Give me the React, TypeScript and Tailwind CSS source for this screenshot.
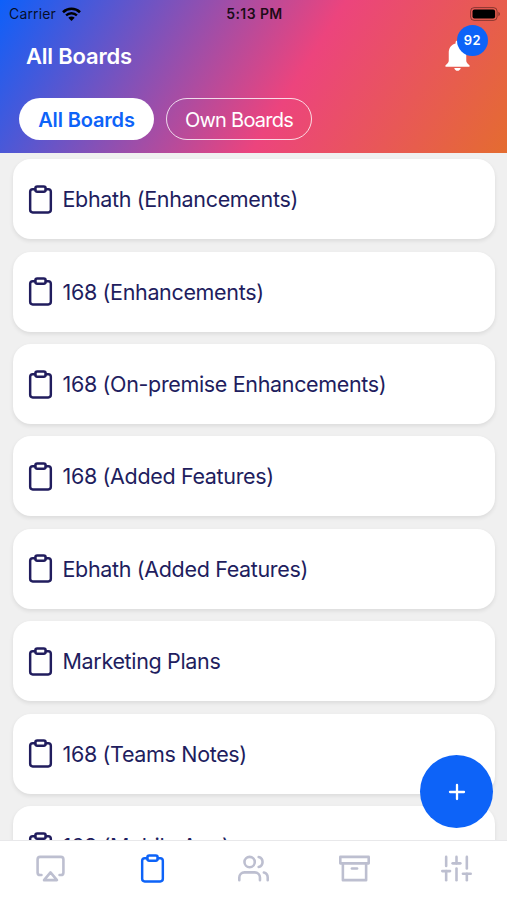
import { FiAirplay, FiArchive, FiPlus, FiSliders, FiUsers } from 'react-icons/fi';

const boards = [
  'Ebhath (Enhancements)',
  '168 (Enhancements)',
  '168 (On-premise Enhancements)',
  '168 (Added Features)',
  'Ebhath (Added Features)',
  'Marketing Plans',
  '168 (Teams Notes)',
  '168 (Mobile App)',
];

const tabs = [
  { name: 'Present', icon: FiAirplay },
  { name: 'Boards', icon: Clipboard, active: true },
  { name: 'Members', icon: FiUsers },
  { name: 'Archive', icon: FiArchive },
  { name: 'Settings', icon: FiSliders },
];

function Clipboard({ className }: { className?: string }) {
  return (
    <svg
      className={className}
      viewBox="0 0 24 24"
      fill="none"
      stroke="currentColor"
      strokeWidth="1.9"
      strokeLinecap="round"
      strokeLinejoin="round"
    >
      <path d="M16 4h2a2 2 0 0 1 2 2v14a2 2 0 0 1-2 2H6a2 2 0 0 1-2-2V6a2 2 0 0 1 2-2h2" />
      <rect x="8" y="2" width="8" height="4" rx="1.5" />
    </svg>
  );
}

function StatusBar() {
  return (
    <div className="grid h-[27px] grid-cols-3 items-center pr-[7px] pl-[9px] text-black/85">
      <div className="flex items-center gap-[6px]">
        <span className="text-[14px] tracking-[0.15px]">Carrier</span>
        <svg className="h-[14px] w-[19px]" viewBox="0 0 19 14">
          <path d="M1 5.2 A12.3 12.3 0 0 1 18 5.2" fill="none" stroke="#000" strokeWidth="2.6" />
          <path d="M4.1 8.4 A7.8 7.8 0 0 1 14.9 8.4" fill="none" stroke="#000" strokeWidth="2.4" />
          <path d="M9.5 14 L6.3 10.7 A4.6 4.6 0 0 1 12.7 10.7 Z" fill="#000" />
        </svg>
      </div>
      <span className="text-center text-[14px] font-semibold tracking-[0.4px]">5:13 PM</span>
      <svg className="h-[14px] w-[30px] justify-self-end" viewBox="0 0 30 14">
        <rect x="0.6" y="0.6" width="26.5" height="12.8" rx="3.6" fill="none" stroke="#000" strokeOpacity="0.4" />
        <rect x="2.5" y="2.4" width="22.6" height="9.2" rx="2" fill="#000" />
        <path d="M28.4 4.8 Q30 5.6 30 7 Q30 8.4 28.4 9.2 Z" fill="#000" fillOpacity="0.4" />
      </svg>
    </div>
  );
}

function Bell() {
  return (
    <button className="relative mt-[13px] h-[31px] w-[25px] text-white">
      <svg viewBox="0 0 26 31" className="h-[31px] w-[25px]" preserveAspectRatio="none">
        <path
          d="M13 0.5 C11.8 0.5 11 1.4 11 2.6 V3.4 C6.4 4.5 3.9 8 3.9 12.6 V20.4 C3.9 22.4 3 23 0.5 25.2 V26.8 H25.5 V25.2 C23 23 22.1 22.4 22.1 20.4 V12.6 C22.1 8 19.6 4.5 15 3.4 V2.6 C15 1.4 14.2 0.5 13 0.5 Z"
          fill="currentColor"
        />
        <path d="M9.6 27.9 H16.4 C15.9 29.8 14.6 30.7 13 30.7 C11.4 30.7 10.1 29.8 9.6 27.9 Z" fill="currentColor" />
      </svg>
      <span className="absolute -top-[15px] left-[12px] flex h-[31px] w-[31px] items-center justify-center rounded-full bg-[#0d63f8] text-[13px] font-semibold tracking-[0.5px]">
        92
      </span>
    </button>
  );
}

export default function App() {
  return (
    <div className="relative flex h-[900px] w-[507px] flex-col overflow-hidden bg-[#f0f0f0] font-['Inter','Liberation_Sans',sans-serif]">
      <header className="h-[153px] shrink-0 bg-[linear-gradient(122deg,#0d60fa_0%,#ec447d_57.5%,#e46c30_100%)]">
        <StatusBar />

        <div className="flex h-[71px] items-start justify-between pr-[37px] pl-[26px]">
          <h1 className="mt-[13px] text-[22px] leading-[32px] font-semibold tracking-[-0.2px] text-white">All Boards</h1>
          <Bell />
        </div>

        {/* Filters */}
        <div className="flex gap-3 pl-[19px] text-[20px]">
          <button className="h-[42px] w-[135px] rounded-full bg-white pt-px font-semibold tracking-[-0.15px] text-[#0d63f8]">
            All Boards
          </button>
          <button className="h-[42px] w-[146px] rounded-full border border-white/80 pt-px tracking-[-0.75px] text-white">
            Own Boards
          </button>
        </div>
      </header>

      <main className="flex min-h-0 flex-1 flex-col gap-[12.4px] overflow-hidden px-[13px] pt-[6.3px]">
        {boards.map((board) => (
          <div
            key={board}
            className="flex h-[80px] w-[482px] shrink-0 items-center rounded-[18px] bg-white pl-[12px] text-[#211d5e] shadow-[0_2px_4px_rgba(0,0,0,0.09)]"
          >
            <Clipboard className="h-[31px] w-[31px]" />
            <span className="ml-[6.5px] text-[21.5px] tracking-[-0.34px]">{board}</span>
          </div>
        ))}
      </main>

      <nav className="flex h-[60px] shrink-0 items-start border-t border-[#e8e8ea] bg-white pt-[12px]">
        {tabs.map(({ name, icon: Icon, active }) => (
          <button
            key={name}
            aria-label={name}
            className={`flex flex-1 justify-center ${active ? 'text-[#0d63f8]' : 'text-[#bdbfd0]'}`}
          >
            <Icon className="h-[31px] w-[31px]" />
          </button>
        ))}
      </nav>

      {/* Add board */}
      <button
        aria-label="Add board"
        className="absolute right-[14px] bottom-[72px] flex h-[73px] w-[73px] items-center justify-center rounded-full bg-[#0d63f8] text-white"
      >
        <FiPlus className="h-[24px] w-[24px]" strokeWidth={2.3} />
      </button>
    </div>
  );
}
